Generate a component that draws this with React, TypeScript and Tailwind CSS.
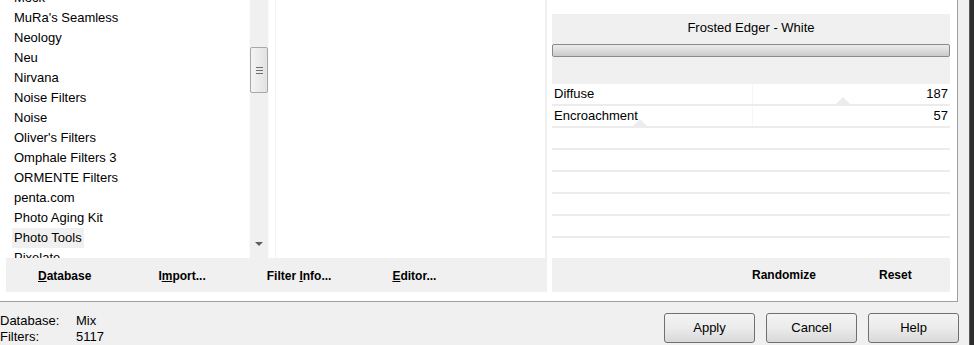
import React from "react";

const filters = [
  "Mock",
  "MuRa's Seamless",
  "Neology",
  "Neu",
  "Nirvana",
  "Noise Filters",
  "Noise",
  "Oliver's Filters",
  "Omphale Filters 3",
  "ORMENTE Filters",
  "penta.com",
  "Photo Aging Kit",
  "Photo Tools",
  "Pixelate",
];

const params = [
  { name: "Diffuse", value: 187 },
  { name: "Encroachment", value: 57 },
];

function ToolButton({ label, u, rest }: { label?: string; u: string; rest: string }) {
  return (
    <span className="text-[12px] font-bold text-black">
      {label}
      <span className="underline">{u}</span>
      {rest}
    </span>
  );
}

function DialogButton({ children }: { children: React.ReactNode }) {
  return (
    <button className="w-[91px] h-[30px] rounded-[3px] border border-[#707070] bg-gradient-to-b from-[#f4f4f4] via-[#ebebeb] to-[#d9d9d9] text-[13px] text-black">
      {children}
    </button>
  );
}

export default function App() {
  return (
    <div className="w-[974px] h-[345px] flex bg-[#f0f0f0] overflow-hidden font-['Liberation_Sans',Arial,sans-serif] text-black">
      <div className="w-[969px] flex flex-col">
        {/* Upper dialog area */}
        <div className="w-[958px] h-[302px] bg-white border-r border-b border-[#a0a0a0] flex">
          {/* Filter list + info panel */}
          <div className="w-[545px] flex flex-col">
            <div className="h-[258px] flex">
              <div className="w-[249px] overflow-hidden">
                <div className="-mt-[12px]">
                  {filters.map((f) => (
                    <div key={f} className="h-[20px] flex items-center pl-[12px]">
                      <span
                        className={
                          "px-[2px] h-[20px] leading-[20px] text-[13px] " +
                          (f === "Photo Tools" ? "bg-[#f0f0f0]" : "")
                        }
                      >
                        {f}
                      </span>
                    </div>
                  ))}
                </div>
              </div>
              {/* Scrollbar */}
              <div className="w-[20px] bg-[#f0f0f0] border-x border-[#fafafa] relative">
                <div className="absolute left-0 top-[47px] w-[18px] h-[46px] border border-[#a8a8a8] rounded-[2px] bg-gradient-to-r from-[#f4f4f4] to-[#e2e2e2] flex flex-col items-center justify-center gap-[2px]">
                  <div className="w-[7px] h-px bg-[#6f6f6f]" />
                  <div className="w-[7px] h-px bg-[#6f6f6f]" />
                  <div className="w-[7px] h-px bg-[#6f6f6f]" />
                </div>
                <div className="absolute left-[5px] top-[242px] w-0 h-0 border-l-[4px] border-r-[4px] border-t-[4px] border-transparent border-t-[#606060]" />
              </div>
              <div className="w-[6px]" />
              <div className="flex-1 border-l border-[#f4f4f4]" />
            </div>
            <div className="ml-[6px] h-[34px] bg-[#f0f0f0] flex items-center">
              <div className="ml-[32px]">
                <ToolButton u="D" rest="atabase" />
              </div>
              <div className="ml-[67px]">
                <ToolButton label="I" u="m" rest="port..." />
              </div>
              <div className="ml-[61px]">
                <ToolButton label="Filter " u="I" rest="nfo..." />
              </div>
              <div className="ml-[61px]">
                <ToolButton u="E" rest="ditor..." />
              </div>
            </div>
          </div>
          <div className="w-[2px] h-[292px] bg-[#f0f0f0]" />

          {/* Parameters panel */}
          <div className="w-[398px] ml-[5px] pt-[14px] flex flex-col">
            <div className="h-[70px] bg-[#f0f0f0] flex flex-col">
              <div className="h-[28px] flex items-center justify-center text-[13px]">
                Frosted Edger - White
              </div>
              <div className="mt-[2px] h-[13px] rounded-[2px] border border-[#8a8a8a] bg-gradient-to-b from-[#ececec] via-[#dcdcdc] to-[#c9c9c9]" />
            </div>
            <div className="relative">
              <div className="absolute left-[200px] top-0 w-px h-[44px] bg-[#f6f6f6]" />
              {params.map((p) => (
                <div key={p.name} className="relative h-[22px] border-b-2 border-[#ececec] flex items-center justify-between px-[2px] text-[13px]">
                  <span>{p.name}</span>
                  <span>{p.value}</span>
                  <div
                    className="absolute bottom-0 w-0 h-0 border-l-[7px] border-r-[7px] border-b-[7px] border-transparent border-b-[#ececec]"
                    style={{ left: Math.round((p.value / 255) * 398) - 8 }}
                  />
                </div>
              ))}
              {[0, 1, 2, 3, 4].map((i) => (
                <div key={i} className="h-[22px] border-b-2 border-[#ececec]" />
              ))}
            </div>
            <div className="mt-[20px] h-[34px] bg-[#f0f0f0] flex items-center text-[12px] font-bold">
              <span className="ml-[200px]">Randomize</span>
              <span className="ml-[63px]">Reset</span>
            </div>
          </div>
        </div>

        {/* Status + dialog buttons */}
        <div className="flex-1 flex">
          <div className="pt-[11px] text-[13px] leading-[16px]">
            <div className="flex">
              <span className="w-[76px]">Database:</span>
              <span>Mix</span>
            </div>
            <div className="flex">
              <span className="w-[76px]">Filters:</span>
              <span>5117</span>
            </div>
          </div>
          <div className="ml-auto mr-[10px] pt-[11px] flex gap-[11px]">
            <DialogButton>Apply</DialogButton>
            <DialogButton>Cancel</DialogButton>
            <DialogButton>Help</DialogButton>
          </div>
        </div>
      </div>
      <div className="w-[5px] bg-[#2e2e2e] border-l border-[#5a5a5a]" />
    </div>
  );
}
